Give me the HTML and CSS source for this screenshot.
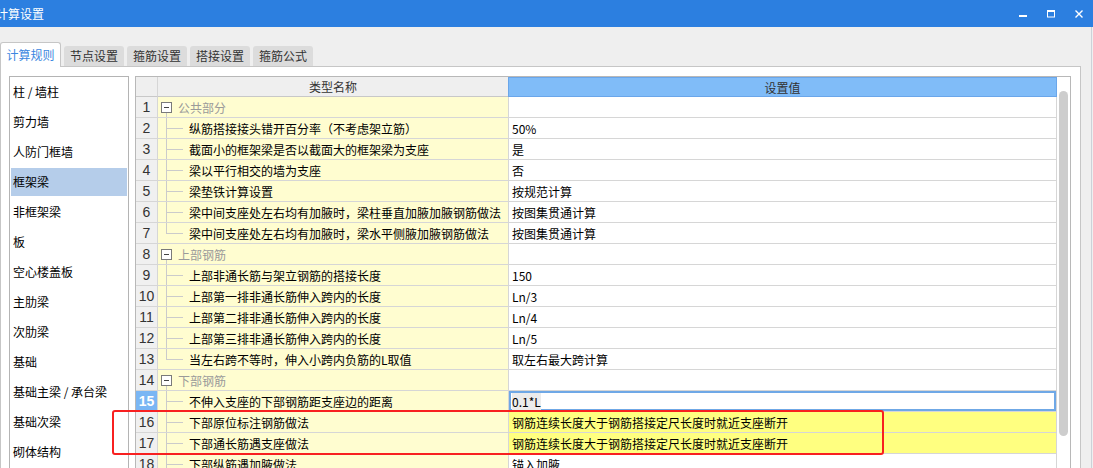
FILE: index.html
```html
<!DOCTYPE html>
<html lang="zh-CN">
<head>
<meta charset="utf-8">
<title>计算设置</title>
<link rel="stylesheet" href="styles.css">
</head>
<body>
<div class="titlebar">
  <span class="title">计算设置</span>
  <div class="controls">
    <svg viewBox="0 0 28 27"><rect x="10" y="15" width="8" height="2" fill="#fff"/></svg>
    <svg viewBox="0 0 28 27"><rect x="10.5" y="10.5" width="7" height="6.5" fill="none" stroke="#fff"/><rect x="10" y="10" width="8" height="2" fill="#fff"/></svg>
    <svg viewBox="0 0 28 27"><path d="M10.5 10.5 L17.5 17.5 M17.5 10.5 L10.5 17.5" stroke="#fff" stroke-width="1.4" fill="none"/></svg>
  </div>
</div>
<div class="main">
  <div class="tabs">
    <div class="tab active">计算规则</div>
    <div class="tab">节点设置</div>
    <div class="tab">箍筋设置</div>
    <div class="tab">搭接设置</div>
    <div class="tab">箍筋公式</div>
  </div>
  <div class="panel">
    <ul class="list">
      <li>柱 / 墙柱</li>
      <li>剪力墙</li>
      <li>人防门框墙</li>
      <li class="selected">框架梁</li>
      <li>非框架梁</li>
      <li>板</li>
      <li>空心楼盖板</li>
      <li>主肋梁</li>
      <li>次肋梁</li>
      <li>基础</li>
      <li>基础主梁 / 承台梁</li>
      <li>基础次梁</li>
      <li>砌体结构</li>
      <li>其它</li>
    </ul>
    <div class="grid">
      <div class="table">
        <div class="row head"><div class="cell num"></div><div class="cell name">类型名称</div><div class="cell val">设置值</div></div>
        <div class="row"><div class="cell num">1</div><div class="cell name group"><span class="minus"></span><span class="gtext">公共部分</span></div><div class="cell val"></div></div>
        <div class="row"><div class="cell num">2</div><div class="cell name"><span class="tree"></span>纵筋搭接接头错开百分率（不考虑架立筋）</div><div class="cell val">50%</div></div>
        <div class="row"><div class="cell num">3</div><div class="cell name"><span class="tree"></span>截面小的框架梁是否以截面大的框架梁为支座</div><div class="cell val">是</div></div>
        <div class="row"><div class="cell num">4</div><div class="cell name"><span class="tree"></span>梁以平行相交的墙为支座</div><div class="cell val">否</div></div>
        <div class="row"><div class="cell num">5</div><div class="cell name"><span class="tree"></span>梁垫铁计算设置</div><div class="cell val">按规范计算</div></div>
        <div class="row"><div class="cell num">6</div><div class="cell name"><span class="tree"></span>梁中间支座处左右均有加腋时，梁柱垂直加腋加腋钢筋做法</div><div class="cell val">按图集贯通计算</div></div>
        <div class="row"><div class="cell num">7</div><div class="cell name"><span class="tree last"></span>梁中间支座处左右均有加腋时，梁水平侧腋加腋钢筋做法</div><div class="cell val">按图集贯通计算</div></div>
        <div class="row"><div class="cell num">8</div><div class="cell name group"><span class="minus"></span><span class="gtext">上部钢筋</span></div><div class="cell val"></div></div>
        <div class="row"><div class="cell num">9</div><div class="cell name"><span class="tree"></span>上部非通长筋与架立钢筋的搭接长度</div><div class="cell val">150</div></div>
        <div class="row"><div class="cell num">10</div><div class="cell name"><span class="tree"></span>上部第一排非通长筋伸入跨内的长度</div><div class="cell val">Ln/3</div></div>
        <div class="row"><div class="cell num">11</div><div class="cell name"><span class="tree"></span>上部第二排非通长筋伸入跨内的长度</div><div class="cell val">Ln/4</div></div>
        <div class="row"><div class="cell num">12</div><div class="cell name"><span class="tree"></span>上部第三排非通长筋伸入跨内的长度</div><div class="cell val">Ln/5</div></div>
        <div class="row"><div class="cell num">13</div><div class="cell name"><span class="tree last"></span>当左右跨不等时，伸入小跨内负筋的L取值</div><div class="cell val">取左右最大跨计算</div></div>
        <div class="row"><div class="cell num">14</div><div class="cell name group"><span class="minus"></span><span class="gtext">下部钢筋</span></div><div class="cell val"></div></div>
        <div class="row"><div class="cell num sel">15</div><div class="cell name"><span class="tree"></span>不伸入支座的下部钢筋距支座边的距离</div><div class="cell val edit"><span class="seltext">0.1*L</span></div></div>
        <div class="row"><div class="cell num">16</div><div class="cell name"><span class="tree"></span>下部原位标注钢筋做法</div><div class="cell val hl">钢筋连续长度大于钢筋搭接定尺长度时就近支座断开</div></div>
        <div class="row"><div class="cell num">17</div><div class="cell name"><span class="tree"></span>下部通长筋遇支座做法</div><div class="cell val hl">钢筋连续长度大于钢筋搭接定尺长度时就近支座断开</div></div>
        <div class="row"><div class="cell num">18</div><div class="cell name"><span class="tree"></span>下部纵筋遇加腋做法</div><div class="cell val">锚入加腋</div></div>
      </div>
      <div class="vscroll"><div class="thumb"></div></div>
    </div>
  </div>
</div>
<div class="annot"></div>
</body>
</html>
```
FILE: styles.css
```css
html, body {
  margin: 0;
  padding: 0;
}
body {
  width: 1093px;
  height: 468px;
  overflow: hidden;
  background: #efefef;
  font-family: "Noto Sans CJK SC", "Microsoft YaHei", sans-serif;
  font-size: 12px;
  color: #000;
  position: relative;
}
.titlebar {
  height: 27px;
  background: #2c7fe0;
  display: flex;
  align-items: center;
  justify-content: space-between;
  color: #fff;
}
.title {
  margin-left: -4px;
  font-size: 12px;
  line-height: 27px;
}
.controls {
  display: flex;
  align-self: stretch;
}
.controls svg {
  width: 28px;
  height: 27px;
  display: block;
}
.main {
  width: 1091px;
  height: 441px;
  border-right: 1px solid #cdd1d8;
}
.tabs {
  display: flex;
  align-items: flex-end;
  gap: 3px;
  padding-top: 15px;
  margin-bottom: -1px;
}
.tab {
  width: 60px;
  height: 20px;
  margin-bottom: 1px;
  box-sizing: border-box;
  background: #dcdcdc;
  border-radius: 3px 3px 0 0;
  text-align: center;
  line-height: 20px;
  color: #333;
}
.tab.active {
  width: 61px;
  height: 25px;
  margin-bottom: 0;
  background: #fff;
  border: 1px solid #c6c6c6;
  border-bottom: none;
  color: #3b87e0;
  line-height: 24px;
  position: relative;
  z-index: 1;
}
.panel {
  width: 1081px;
  height: 402px;
  box-sizing: border-box;
  background: #fff;
  border-top: 1px solid #c6c6c6;
  border-left: 1px solid #c6c6c6;
  border-right: 1px solid #c6c6c6;
  padding: 9px 9px 0 8px;
  display: flex;
  gap: 6px;
  align-items: flex-start;
}
.list {
  list-style: none;
  margin: 0;
  width: 120px;
  height: 420px;
  box-sizing: border-box;
  border: 1px solid #b4b4b4;
  padding: 1px 0 0 0;
}
.list li {
  height: 28px;
  line-height: 28px;
  margin: 0 0 2px 1px;
  width: 116px;
  padding-left: 2px;
  box-sizing: border-box;
  white-space: nowrap;
}
.list li.selected {
  background: #b5cdea;
}
.grid {
  width: 936px;
  height: 420px;
  box-sizing: border-box;
  border: 1px solid #b8b8b8;
  display: flex;
}
.table {
  width: 921px;
}
.row {
  display: flex;
  height: 21px;
}
.cell {
  box-sizing: border-box;
  border-right: 1px solid #d6d6d6;
  border-bottom: 1px solid #d6d6d6;
  display: flex;
  align-items: center;
  white-space: nowrap;
  overflow: hidden;
}
.num {
  width: 22px;
  background: #f0f0f0;
  justify-content: center;
  font-family: "Liberation Sans", Arial, sans-serif;
  font-size: 14px;
  color: #333;
}
.name {
  width: 351px;
  background: #fffdd0;
  padding-left: 4px;
}
.val {
  width: 548px;
  background: #fff;
  padding-left: 3px;
}
.row.head {
  height: 20px;
}
.head .cell {
  background: #efefef;
  color: #333;
  border-bottom-color: #c8c8c8;
  justify-content: center;
}
.head .name {
  width: 350px;
  border-right: none;
  padding-left: 0;
}
.head .val {
  width: 549px;
  padding-left: 0;
  background: #80bcf8;
  border: 1px solid #6aa6ea;
}
.name.group {
  padding-left: 3px;
  background: linear-gradient(#cbcbcb, #cbcbcb) 8px 100% / 1px 50% no-repeat, #fffdd0;
}
.minus {
  width: 11px;
  height: 11px;
  box-sizing: border-box;
  border: 1px solid #7a7a7a;
  background: linear-gradient(#444, #444) center / 5px 1px no-repeat, #fff;
  flex: none;
}
.gtext {
  margin-left: 6px;
  color: #9a9a9a;
}
.tree {
  width: 22px;
  flex: none;
  align-self: stretch;
  margin-right: 5px;
  background:
    linear-gradient(#cbcbcb, #cbcbcb) 4px 0 / 1px 100% no-repeat,
    linear-gradient(#cbcbcb, #cbcbcb) 4px 50% / 17px 1px no-repeat;
}
.tree.last {
  background:
    linear-gradient(#cbcbcb, #cbcbcb) 4px 0 / 1px 50% no-repeat,
    linear-gradient(#cbcbcb, #cbcbcb) 4px 50% / 17px 1px no-repeat;
}
.num.sel {
  background: #7ab6f4;
  color: #fff;
  font-weight: bold;
}
.val.edit {
  box-shadow: inset 0 0 0 2px #6fa8e6;
}
.seltext {
  background: #ececec;
}
.val.hl {
  background: #ffff80;
}
.vscroll {
  width: 13px;
  background: #fff;
}
.thumb {
  margin: 14px 0 0 2px;
  width: 9px;
  height: 345px;
  border-radius: 5px;
  background: #cdcdcd;
}
.annot {
  position: absolute;
  left: 112px;
  top: 410px;
  width: 772px;
  height: 45px;
  box-sizing: border-box;
  border: 2.5px solid #f82020;
  border-radius: 3px;
}
```
